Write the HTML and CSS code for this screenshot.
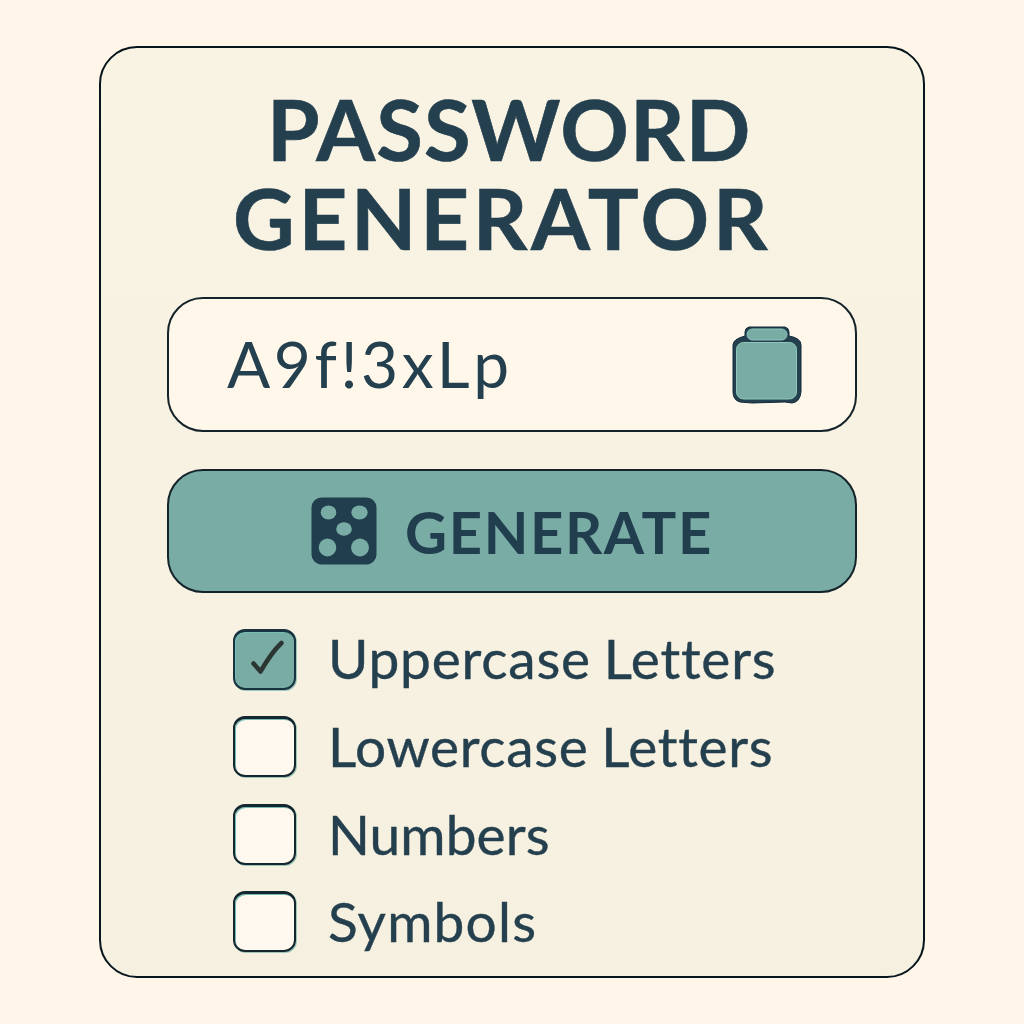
FILE: index.html
```
<!DOCTYPE html>
<html lang="en">
<head>
<meta charset="utf-8">
<title>Password Generator</title>
<link rel="stylesheet" href="styles.css">
</head>
<body>
<main class="card">
  <h1 class="title"><span class="line line-one">PASSWORD</span> <span class="line line-two">GENERATOR</span></h1>
  <div class="field">
    <span class="password">A9f!3xLp</span>
    <svg class="jar" width="70" height="80" viewBox="0 0 70 80">
      <path class="jar-shell" d="M17 2H53Q57 3 57 7V11Q69 13 69 20V67Q68 77 60 78L53 77L20 78L8 77Q1 75 1 67V20Q1 14 13 11V7Q13 3 17 2Z"/>
      <rect class="jar-fill" x="15" y="4" width="40" height="11" rx="5.5"/>
      <rect class="jar-fill" x="4.500" y="17.500" width="60" height="56.500" rx="7"/>
    </svg>
  </div>
  <button class="generate" type="button">
    <svg class="die" width="66" height="68" viewBox="0 0 66 68">
      <rect class="die-body" x="0.500" y="0.500" width="65" height="67" rx="10"/>
      <ellipse class="pip" cx="17.500" cy="15.500" rx="7.800" ry="7"/>
      <ellipse class="pip" cx="48.500" cy="15.500" rx="8.200" ry="7"/>
      <ellipse class="pip" cx="33" cy="32" rx="7.800" ry="6.800"/>
      <ellipse class="pip" cx="16.500" cy="50.500" rx="8.800" ry="9"/>
      <ellipse class="pip" cx="49" cy="50.500" rx="9" ry="9"/>
    </svg>
    <span class="generate-text">GENERATE</span>
  </button>
  <ul class="options">
    <li class="option"><span class="box checked"><svg width="58" height="55" viewBox="0 0 58 55"><path class="tick" d="M18.500 31.500L25.500 39.500C31 30 39 18 46.500 11"/></svg></span><span class="label upper">Uppercase Letters</span></li>
    <li class="option"><span class="box"></span><span class="label lower">Lowercase Letters</span></li>
    <li class="option"><span class="box"></span><span class="label numbers">Numbers</span></li>
    <li class="option"><span class="box"></span><span class="label symbols">Symbols</span></li>
  </ul>
</main>
</body>
</html>
```
FILE: styles.css
```
* { box-sizing: border-box; }
body {
  margin: 0;
  height: 1024px;
  padding: 46px 99px;
  background: #fff6e9;
  color: #243f4e;
  font-family: Lato, "Liberation Sans", sans-serif;
  font-variant-ligatures: none;
}
.card {
  width: 826px;
  height: 932px;
  padding: 36px 66px 0;
  border: 2px solid #07151c;
  border-radius: 38px;
  background: linear-gradient(#f9f3e4, #f5f0df);
}
.title {
  display: flex;
  flex-direction: column;
  height: 213px;
  margin: 0;
  font-size: 85px;
  font-weight: 700;
  line-height: 89px;
  white-space: nowrap;
  -webkit-text-stroke: 0.6px #243f4e;
}
.line-one { padding-left: 100px; letter-spacing: 1px; }
.line-two { padding-left: 66px; letter-spacing: 3.7px; }
.field {
  display: flex;
  justify-content: space-between;
  align-items: center;
  width: 690px;
  height: 135px;
  padding: 0 53px 0 58px;
  border: 2px solid #14232a;
  border-radius: 36px;
  background: #fff8ea;
}
.password {
  padding-bottom: 2px;
  font-size: 64px;
  letter-spacing: 3.5px;
}
.jar-shell { fill: #243f4e; stroke: #112b3d; }
.jar-fill { fill: #7aaca6; stroke: #8fc8bd; }
.generate {
  display: flex;
  align-items: center;
  gap: 28px;
  width: 690px;
  height: 124px;
  margin: 37px 0 36px;
  padding: 0 0 0 142px;
  border: 2px solid #14232a;
  border-radius: 36px;
  background: #7aaca6;
  color: #203e4d;
  font: 700 58px Lato, "Liberation Sans", sans-serif;
  letter-spacing: 1.6px;
}
.die-body { fill: #203e4d; }
.pip { fill: #7aaca6; }
.options {
  display: grid;
  grid-auto-rows: 87.3px;
  margin: 0;
  padding: 0 0 0 66px;
  list-style: none;
}
.option { display: flex; gap: 32px; height: 61px; align-items: center; white-space: nowrap; }
.box {
  flex: none;
  width: 63px;
  height: 61px;
  border: 2.5px solid #14272e;
  border-top-width: 3px;
  border-radius: 12px;
  background: #fff8ee;
  box-shadow: 1px 1px 0 #9bc6b9, inset 1px 1px 0 #77bdb4;
}
.checked { background: #7aaca6; border-color: #18323f; }
.tick { fill: none; stroke: #2b3532; stroke-width: 4.5; stroke-linecap: round; stroke-linejoin: round; }
.label { font-size: 55px; -webkit-text-stroke: 0.4px #243f4e; }
.upper { padding-bottom: 4px; letter-spacing: 0.8px; word-spacing: -2px; }
.lower { padding-bottom: 2px; letter-spacing: 0.7px; word-spacing: -2px; }
.numbers { padding-bottom: 1px; letter-spacing: 0.1px; }
.symbols { letter-spacing: 1.2px; }
```
